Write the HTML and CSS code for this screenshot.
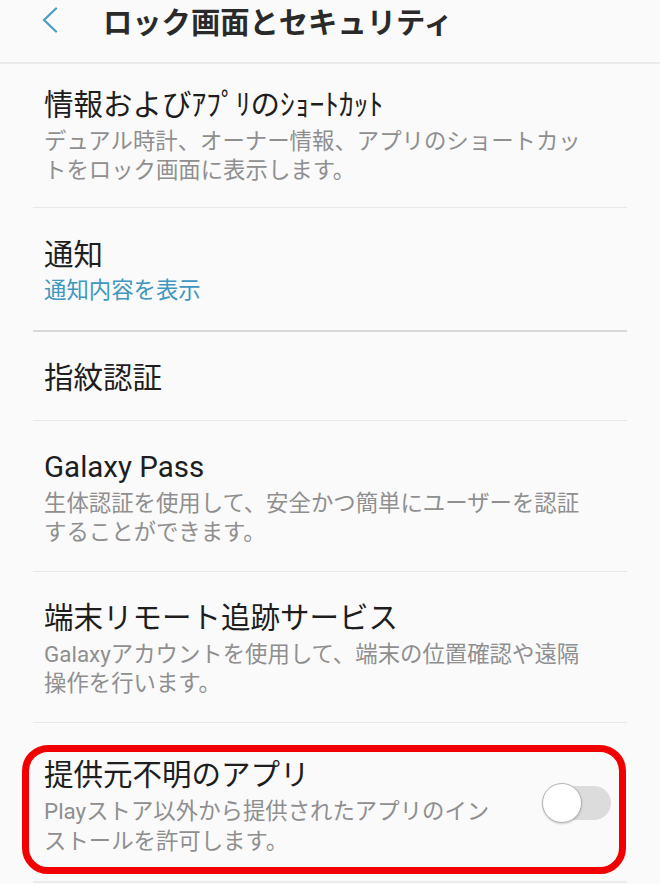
FILE: index.html
```html
<!DOCTYPE html>
<html lang="ja">
<head>
<meta charset="utf-8">
<title>ロック画面とセキュリティ</title>
<link rel="stylesheet" href="styles.css">
</head>
<body>
<div class="page">
  <header class="appbar">
    <svg class="back" width="18" height="26" viewBox="0 0 18 26" aria-hidden="true">
      <path d="M15 1.5 L3 13 L15 24.5" fill="none" stroke="#4a9ec3" stroke-width="2.3" stroke-linecap="round" stroke-linejoin="round"/>
    </svg>
    <h1 class="appbar-title">ロック画面とセキュリティ</h1>
  </header>

  <ul class="list">
    <li class="item item--first">
      <div class="item-text">
        <div class="item-title">情報およびｱﾌﾟﾘのｼｮｰﾄｶｯﾄ</div>
        <div class="item-sub">デュアル時計、オーナー情報、アプリのショートカットをロック画面に表示します。</div>
      </div>
    </li>
    <li class="item item--group-end">
      <div class="item-text">
        <div class="item-title">通知</div>
        <div class="item-sub item-sub--accent">通知内容を表示</div>
      </div>
    </li>
    <li class="item">
      <div class="item-text">
        <div class="item-title">指紋認証</div>
      </div>
    </li>
    <li class="item">
      <div class="item-text">
        <div class="item-title">Galaxy Pass</div>
        <div class="item-sub">生体認証を使用して、安全かつ簡単にユーザーを認証することができます。</div>
      </div>
    </li>
    <li class="item">
      <div class="item-text">
        <div class="item-title">端末リモート追跡サービス</div>
        <div class="item-sub">Galaxyアカウントを使用して、端末の位置確認や遠隔操作を行います。</div>
      </div>
    </li>
    <li class="item item--toggle">
      <div class="item-text item-text--narrow">
        <div class="item-title">提供元不明のアプリ</div>
        <div class="item-sub">Playストア以外から提供されたアプリのインストールを許可します。</div>
      </div>
      <div class="switch" role="switch" aria-checked="false">
        <span class="switch-knob"></span>
      </div>
      <div class="highlight"></div>
    </li>
  </ul>
</div>
</body>
</html>
```

FILE: styles.css
```css
html, body {
  margin: 0;
  padding: 0;
  background: #fafafa;
}

body {
  font-family: Roboto, "Noto Sans CJK JP", sans-serif;
  color: #1f1f1f;
  width: 660px;
  height: 884px;
  overflow: hidden;
}

.page {
  position: relative;
}

.appbar {
  display: flex;
  align-items: center;
  height: 40px;
  padding: 0 0 22px 41px;
  border-bottom: 2px solid #e9e9e9;
}

.back {
  display: block;
  flex: none;
}

.appbar-title {
  margin: 0 0 0 44px;
  font-family: "Noto Sans CJK JP", sans-serif;
  font-size: 29.3px;
  line-height: 40px;
  font-weight: 700;
  color: #2a2a2a;
  letter-spacing: 0;
}

.list {
  list-style: none;
  margin: 0 33px;
  padding: 0;
}

.item {
  position: relative;
  display: flex;
  align-items: center;
  padding: 28px 16px 24px 11px;
  border-bottom: 1px solid #e8e8e8;
}

.item--first {
  padding-top: 23px;
  padding-bottom: 22px;
}

.item--group-end {
  padding-top: 29px;
  padding-bottom: 25px;
  border-bottom: 2px solid #d8d8d8;
}

.item--toggle {
  padding-top: 34px;
  padding-bottom: 25px;
  border-bottom: 2px solid #ececec;
}

.item-text {
  flex: 1 1 auto;
  max-width: 550px;
}

.item-text--narrow {
  flex: 0 0 460px;
}

.item-title {
  font-size: 29.5px;
  line-height: 36px;
  color: #1e1e1e;
  white-space: nowrap;
}

.item-sub {
  margin-top: 4px;
  font-size: 22.4px;
  line-height: 29px;
  color: #8f8f8f;
}

.item--toggle .item-sub {
  margin-top: 3px;
  line-height: 30px;
}

.item-sub--accent {
  color: #3f97bf;
  margin-top: 3px;
}

.switch {
  position: relative;
  flex: none;
  margin-left: auto;
  margin-bottom: 8px;
  width: 68px;
  height: 34px;
  border-radius: 17px;
  background: #dcdcdc;
}

.switch-knob {
  position: absolute;
  left: -1px;
  top: -3px;
  width: 38px;
  height: 38px;
  border-radius: 50%;
  background: #ffffff;
  border: 1px solid #b4b4b4;
  box-shadow: 0 1px 2px rgba(0, 0, 0, 0.18);
}

.highlight {
  position: absolute;
  left: -11px;
  right: 1px;
  top: 22px;
  bottom: 7px;
  border: 7px solid #f20000;
  border-radius: 26px;
  pointer-events: none;
}
```
